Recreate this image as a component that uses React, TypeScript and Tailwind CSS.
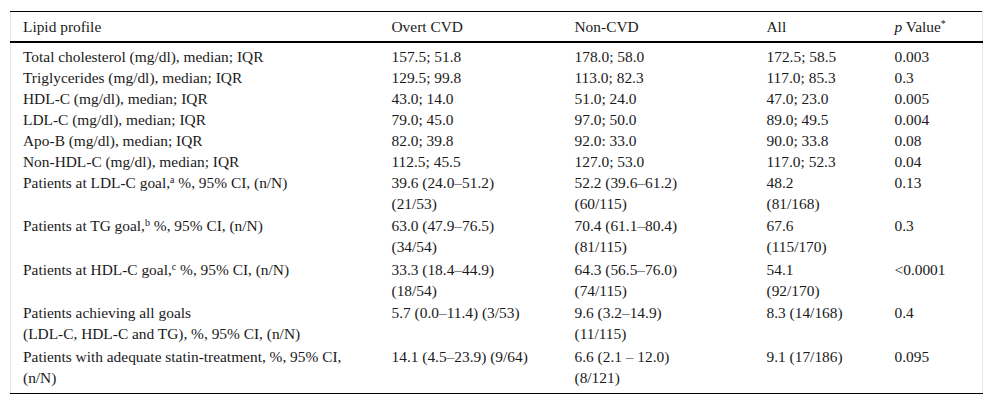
const rows: { label: React.ReactNode; cvd: React.ReactNode; non: React.ReactNode; all: React.ReactNode; p: string; two?: boolean }[] = [
  { label: "Total cholesterol (mg/dl), median; IQR", cvd: "157.5; 51.8", non: "178.0; 58.0", all: "172.5; 58.5", p: "0.003" },
  { label: "Triglycerides (mg/dl), median; IQR", cvd: "129.5; 99.8", non: "113.0; 82.3", all: "117.0; 85.3", p: "0.3" },
  { label: "HDL-C (mg/dl), median; IQR", cvd: "43.0; 14.0", non: "51.0; 24.0", all: "47.0; 23.0", p: "0.005" },
  { label: "LDL-C (mg/dl), median; IQR", cvd: "79.0; 45.0", non: "97.0; 50.0", all: "89.0; 49.5", p: "0.004" },
  { label: "Apo-B (mg/dl), median; IQR", cvd: "82.0; 39.8", non: "92.0: 33.0", all: "90.0; 33.8", p: "0.08" },
  { label: "Non-HDL-C (mg/dl), median; IQR", cvd: "112.5; 45.5", non: "127.0; 53.0", all: "117.0; 52.3", p: "0.04" },
  {
    label: (<>Patients at LDL-C goal,<sup className="text-[10px]">a</sup> %, 95% CI, (n/N)</>),
    cvd: (<>39.6 (24.0–51.2)<br />(21/53)</>),
    non: (<>52.2 (39.6–61.2)<br />(60/115)</>),
    all: (<>48.2<br />(81/168)</>),
    p: "0.13",
    two: true,
  },
  {
    label: (<>Patients at TG goal,<sup className="text-[10px]">b</sup> %, 95% CI, (n/N)</>),
    cvd: (<>63.0 (47.9–76.5)<br />(34/54)</>),
    non: (<>70.4 (61.1–80.4)<br />(81/115)</>),
    all: (<>67.6<br />(115/170)</>),
    p: "0.3",
    two: true,
  },
  {
    label: (<>Patients at HDL-C goal,<sup className="text-[10px]">c</sup> %, 95% CI, (n/N)</>),
    cvd: (<>33.3 (18.4–44.9)<br />(18/54)</>),
    non: (<>64.3 (56.5–76.0)<br />(74/115)</>),
    all: (<>54.1<br />(92/170)</>),
    p: "<0.0001",
    two: true,
  },
  {
    label: (<>Patients achieving all goals<br />(LDL-C, HDL-C and TG), %, 95% CI, (n/N)</>),
    cvd: "5.7 (0.0–11.4) (3/53)",
    non: (<>9.6 (3.2–14.9)<br />(11/115)</>),
    all: "8.3 (14/168)",
    p: "0.4",
    two: true,
  },
  {
    label: (<>Patients with adequate statin-treatment, %, 95% CI,<br />(n/N)</>),
    cvd: "14.1 (4.5–23.9) (9/64)",
    non: (<>6.6 (2.1 – 12.0)<br />(8/121)</>),
    all: "9.1 (17/186)",
    p: "0.095",
    two: true,
  },
];

export default function App() {
  return (
    <div className="bg-white w-[992px] h-[403px] pt-[11px] px-[10px] font-['Liberation_Serif',serif] text-[15.4px] text-[#1a1a1a]">
      <table className="w-[972px] border-collapse table-fixed border-x border-x-[#e6e6e6] border-t border-t-black border-b border-b-black">
        <colgroup>
          <col className="w-[369px]" />
          <col className="w-[183px]" />
          <col className="w-[192px]" />
          <col className="w-[128px]" />
          <col className="w-[100px]" />
        </colgroup>
        <thead>
          <tr className="border-b-2 border-b-black">
            <th className="text-left font-normal px-3 h-[30px] pt-[2px] leading-[20px]">Lipid profile</th>
            <th className="text-left font-normal px-3 pt-[2px] leading-[20px]">Overt CVD</th>
            <th className="text-left font-normal px-3 pt-[2px] leading-[20px]">Non-CVD</th>
            <th className="text-left font-normal px-3 pt-[2px] leading-[20px]">All</th>
            <th className="text-left font-normal px-3 pt-[2px] leading-[20px]">
              <i>p</i> Value<sup className="text-[10px]">*</sup>
            </th>
          </tr>
        </thead>
        <tbody>
          {rows.map((r, i) => {
            const pad = `${i === 0 ? "pt-[3px]" : "pt-0"} ${i === rows.length - 1 ? "pb-[5px]" : r.two ? "pb-[1.5px]" : "pb-0"}`;
            return (
              <tr key={i} className="align-top">
                <td className={`px-3 leading-[21px] ${pad}`}>{r.label}</td>
                <td className={`px-3 leading-[21px] ${pad}`}>{r.cvd}</td>
                <td className={`px-3 leading-[21px] ${pad}`}>{r.non}</td>
                <td className={`px-3 leading-[21px] ${pad}`}>{r.all}</td>
                <td className={`px-3 leading-[21px] ${pad}`}>{r.p}</td>
              </tr>
            );
          })}
        </tbody>
      </table>
    </div>
  );
}
